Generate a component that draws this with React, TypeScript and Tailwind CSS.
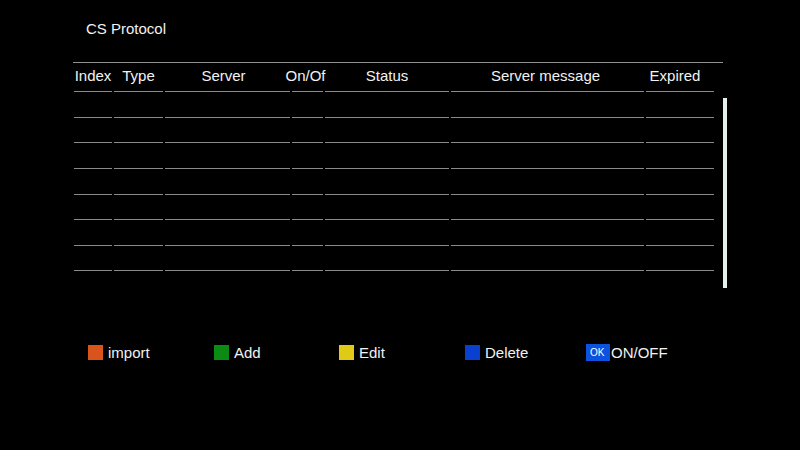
const columns = [
  { label: "Index", width: "w-[38px]", shift: "" },
  { label: "Type", width: "w-[49px]", shift: "" },
  { label: "Server", width: "w-[125px]", shift: "pr-[8px]" },
  { label: "On/Of", width: "w-[31px]", shift: "pr-[4px]" },
  { label: "Status", width: "w-[124px]", shift: "" },
  { label: "Server message", width: "w-[193px]", shift: "pr-[4px]" },
  { label: "Expired", width: "w-[68px]", shift: "pr-[10px]" },
];

// row heights so the lines land on whole pixels (25.6px average)
const rowHeights = ["h-[26px]", "h-[25px]", "h-[26px]", "h-[26px]", "h-[25px]", "h-[26px]", "h-[25px]"];

const keys = [
  { label: "import", color: "bg-[#d9541c]", width: "w-[126px]" },
  { label: "Add", color: "bg-[#0b8a14]", width: "w-[125px]" },
  { label: "Edit", color: "bg-[#e0ca18]", width: "w-[126px]" },
  { label: "Delete", color: "bg-[#0a40d0]", width: "w-[121px]" },
];

export default function App() {
  return (
    <div
      className="flex h-[450px] w-[800px] flex-col overflow-hidden bg-black text-[#f2f2f2]"
      style={{ fontFamily: '"Liberation Sans", Arial, sans-serif' }}
    >
      <div className="pl-[86px] pt-[21px] text-[15px] leading-[15px]">CS Protocol</div>

      <div className="mt-[26px] flex pl-[73px]">
        <div className="w-[650px] border-t border-[#909090] pl-[1px]">
          <div className="flex gap-[2px]">
            {columns.map((c) => (
              <div
                key={c.label}
                className={`${c.width} ${c.shift} h-[29px] whitespace-nowrap border-b border-[#8a8a8a] pt-[5px] text-center text-[15px] leading-[15px]`}
              >
                <span className="inline-block -mx-4">{c.label}</span>
              </div>
            ))}
          </div>
          {rowHeights.map((h, i) => (
            <div key={i} className="flex gap-[2px]">
              {columns.map((c) => (
                <div key={c.label} className={`${c.width} ${h} border-b border-[#8a8a8a]`} />
              ))}
            </div>
          ))}
        </div>
        <div className="mt-[36px] h-[190px] w-[4px] bg-[#e6eeea]" />
      </div>

      <div className="mt-[57px] flex pl-[88px]">
        {keys.map((k) => (
          <div key={k.label} className={`${k.width} flex h-[15px] items-center gap-[5px]`}>
            <div className={`h-[15px] w-[15px] ${k.color}`} />
            <span className="text-[15px] leading-[15px]">{k.label}</span>
          </div>
        ))}
        <div className="flex h-[15px] items-center">
          <div className="flex h-[17px] w-[24px] items-center bg-[#0c52de] pl-[4px] text-[10px] leading-[10px] text-white">
            OK
          </div>
          <span className="pl-[1px] text-[15px] leading-[15px]">ON/OFF</span>
        </div>
      </div>
    </div>
  );
}
